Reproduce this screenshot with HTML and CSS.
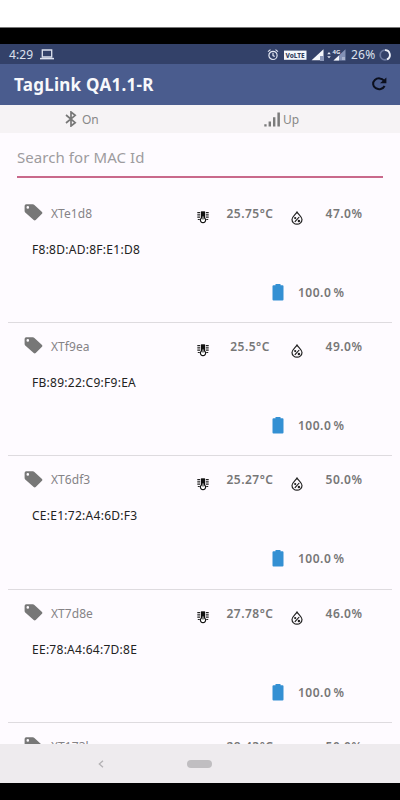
FILE: index.html
```html
<!DOCTYPE html>
<html lang="en">
<head>
<meta charset="utf-8">
<title>TagLink QA1.1-R</title>
<link rel="stylesheet" href="styles.css">
</head>
<body>
<svg class="defs" aria-hidden="true">
  <symbol id="tag" viewBox="0 0 19 17"><path fill-rule="evenodd" d="M2.2.3H8.8Q9.7.3 10.4.9L18 8Q18.9 8.9 18 9.8L11.7 16Q10.7 16.9 9.7 16L1.2 8.4Q.6 7.8.6 7V1.9Q.6.3 2.2.3ZM3.8 2.1A1.3 1.3 0 1 0 3.8 4.7A1.3 1.3 0 1 0 3.8 2.1Z"/></symbol>
  <symbol id="thermo" viewBox="0 0 12 13"><path d="M4.5 1H7.5V7A2.6 2.6 0 1 1 4.5 7Z" fill="#fff" stroke="#111" stroke-width="1.2"/><path d="M4.2.6H7.8V5.5H4.2Z" fill="#111"/><path d="M6 5V8.5" stroke="#333" stroke-width="1.2"/><path d="M.3 1.6H3.2M.3 3.9H3.2M.3 6.2H3.2M.8 8.5H2.8M8.8 1.6H11.7M8.8 3.9H11.7M8.8 6.2H11.7M9.2 8.5H11.2" stroke="#222" stroke-width="1.2"/></symbol>
  <symbol id="drop" viewBox="0 0 12 14"><path d="M6 1C4.7 3.4 1 5.6 1 8.6A5 4.6 0 0 0 11 8.6C11 5.6 7.3 3.4 6 1Z" fill="none" stroke="#222" stroke-width="1.2"/><path d="M3.8 10.8L8.2 6" stroke="#111" stroke-width="1.1"/><circle cx="4.2" cy="7.1" r="1.1" fill="#222"/><circle cx="7.9" cy="10" r="1.2" fill="#222"/></symbol>
  <symbol id="battery" viewBox="0 0 12 17"><path d="M3.5 0H8.5V1.2H10.5Q11.5 1.2 11.5 2.2V15.5Q11.5 16.5 10.5 16.5H1.5Q.5 16.5.5 15.5V2.2Q.5 1.2 1.5 1.2H3.5Z" fill="#3490d3"/></symbol>
</svg>
<div class="letterbox"></div>
<header class="status">
  <span class="clock">4:29</span>
  <svg class="laptop" viewBox="0 0 14 11"><path d="M2.3 1H11.7V8H2.3Z" fill="none" stroke="#dde1ee" stroke-width="1.3"/><path d="M0 9.6H14" stroke="#dde1ee" stroke-width="1.5"/></svg>
  <svg class="indicators" viewBox="0 0 80 14">
    <g fill="none" stroke="#e3e7f2" stroke-width="1.2"><circle cx="6" cy="7.4" r="4.1"/><path d="M6 4.8V7.6L7.7 8.6M1 3.6L3.5 1.6M11 3.6L8.5 1.6"/></g>
    <path d="M17 2.6H39.5V11.8H17Z" fill="#f5f7fb"/>
    <text x="18.6" y="9.6" class="lte" textLength="19">VoLTE</text>
    <path d="M44.6 12.3L56.5 1.2V12.3Z" fill="#f5f7fb"/>
    <path d="M53 8H57V13H53Z" fill="#8b97b8"/>
    <path d="M60.2 6.2L62 4.1L63.8 6.2ZM60.2 8.2L62 10.3L63.8 8.2Z" fill="#e3e7f2"/>
    <path d="M66.5 12.5L78.5 1.2V12.5Z" fill="#8491b6"/>
    <path d="M66.5 12.5L72 7.4V12.5Z" fill="#f5f7fb"/>
    <text x="65.5" y="5.8" class="net">4G</text>
    <path d="M75 9H78V12H75Z" fill="#aab3ce"/>
  </svg>
  <span class="percent">26%</span>
  <svg class="ring" viewBox="0 0 12 12" fill="none" stroke-width="1.7"><circle cx="6" cy="6" r="4.8" stroke="#6a789f"/><path d="M6 1.2A4.8 4.8 0 0 1 8 10.4" stroke="#edf0f7"/></svg>
</header>
<div class="appbar">
  <h1>TagLink QA1.1-R</h1>
  <svg class="refresh" viewBox="0 0 16 16"><path d="M13 4.6A6 5.4 0 1 0 13.6 10" fill="none" stroke="#0b0f1d" stroke-width="2"/><path d="M15.4 1.6V7.2H9Z" fill="#0b0f1d"/></svg>
</div>
<div class="links">
  <div class="link bluetooth"><svg viewBox="0 0 12 16"><path d="M1 4L10.2 11.7L6 15V1L10.2 4.3L1 12" fill="none" stroke="#777" stroke-width="1.7"/></svg><span>On</span></div>
  <div class="link signal"><svg viewBox="0 0 17 15"><path d="M.3 12.3H2.6V14.5H.3ZM4.6 9.5H7V14.5H4.6ZM9 5.2H11.4V14.5H9ZM13.4.5H15.9V14.5H13.4Z" fill="#7b7b7b"/></svg><span>Up</span></div>
</div>
<main>
  <div class="search">Search for MAC Id</div>
  <section class="list">
    <article class="row"><svg class="tag"><use href="#tag"/></svg><span class="name">XTe1d8</span><svg class="thermo"><use href="#thermo"/></svg><b class="value temp">25.75°C</b><svg class="drop"><use href="#drop"/></svg><b class="value">47.0%</b><span class="mac">F8:8D:AD:8F:E1:D8</span><div class="charge"><svg><use href="#battery"/></svg><b>100.0 %</b></div></article>
    <article class="row"><svg class="tag"><use href="#tag"/></svg><span class="name">XTf9ea</span><svg class="thermo"><use href="#thermo"/></svg><b class="value temp">25.5°C</b><svg class="drop"><use href="#drop"/></svg><b class="value">49.0%</b><span class="mac">FB:89:22:C9:F9:EA</span><div class="charge"><svg><use href="#battery"/></svg><b>100.0 %</b></div></article>
    <article class="row"><svg class="tag"><use href="#tag"/></svg><span class="name">XT6df3</span><svg class="thermo"><use href="#thermo"/></svg><b class="value temp">25.27°C</b><svg class="drop"><use href="#drop"/></svg><b class="value">50.0%</b><span class="mac">CE:E1:72:A4:6D:F3</span><div class="charge"><svg><use href="#battery"/></svg><b>100.0 %</b></div></article>
    <article class="row"><svg class="tag"><use href="#tag"/></svg><span class="name">XT7d8e</span><svg class="thermo"><use href="#thermo"/></svg><b class="value temp">27.78°C</b><svg class="drop"><use href="#drop"/></svg><b class="value">46.0%</b><span class="mac">EE:78:A4:64:7D:8E</span><div class="charge"><svg><use href="#battery"/></svg><b>100.0 %</b></div></article>
    <article class="row"><svg class="tag"><use href="#tag"/></svg><span class="name">XT173b</span><svg class="thermo"><use href="#thermo"/></svg><b class="value temp">28.43°C</b><svg class="drop"><use href="#drop"/></svg><b class="value">50.0%</b></article>
  </section>
</main>
<nav>
  <svg class="back" viewBox="0 0 6 8"><path d="M5 .7L1.3 4L5 7.3" fill="none" stroke="#b3b1b4" stroke-width="1.3"/></svg>
  <span class="home"></span>
</nav>
<div class="footer"></div>
</body>
</html>
```
FILE: styles.css
```css
* { box-sizing: border-box; }
body {
  margin: 0;
  width: 400px;
  height: 800px;
  padding-top: 27px;
  overflow: hidden;
  display: flex;
  flex-direction: column;
  background: #fff;
  font-family: "Noto Sans", "Open Sans", sans-serif;
  color: #777;
}
svg { display: block; flex: none; }
.defs { width: 0; height: 0; position: absolute; }
.letterbox { height: 17px; flex: none; background: #000; border-top: 1px solid #777; }
.status {
  height: 20px;
  flex: none;
  display: flex;
  align-items: center;
  padding: 1px 9px 0 9px;
  background: #334169;
  color: #dde1ee;
  font-size: 12px;
}
.clock { width: 31px; letter-spacing: 0.1px; }
.laptop { width: 14px; height: 11px; }
.indicators { width: 80px; height: 14px; margin-left: auto; }
.lte { font-size: 6.5px; font-weight: 800; fill: #333f60; }
.net { font-size: 6px; font-weight: 700; fill: #e3e7f2; }
.percent { margin-left: 4px; width: 28px; letter-spacing: 0.2px; }
.ring { width: 12px; height: 12px; }
.appbar {
  height: 41px;
  flex: none;
  display: flex;
  align-items: center;
  justify-content: space-between;
  padding: 0 13px 0 14px;
  background: #4a5c8e;
}
h1 { margin: 0; font-size: 17px; line-height: 22px; font-weight: 700; color: #f7f8fb; letter-spacing: 0.26px; }
.refresh { width: 16px; height: 16px; margin-bottom: 1px; }
.links { height: 28px; flex: none; display: flex; background: #f6f3f5; font-size: 12px; color: #888; }
.link { display: flex; align-items: center; }
.bluetooth { width: 200px; padding-left: 65px; gap: 5px; }
.bluetooth svg { width: 12px; height: 16px; }
.signal { padding-left: 64px; gap: 2px; }
.signal svg { width: 17px; height: 15px; }
main { flex: 1; min-height: 0; overflow: hidden; background: #fefbff; }
.search {
  height: 45px;
  margin: 0 17px 11.67px;
  padding-top: 12px;
  border-bottom: 2px solid #c9698b;
  font-size: 15px;
  line-height: 24px;
  letter-spacing: 0.07px;
  color: #9d9b9e;
}
.row {
  height: 133.33px;
  margin: 0 8px;
  padding-left: 16px;
  display: grid;
  grid-template-columns: 27px 146px 12px 82px 12px 82px;
  grid-template-rows: 47px 25px 60px;
  align-items: center;
  border-bottom: 1px solid #dedbdf;
  font-size: 12px;
  overflow: hidden;
}
.tag { width: 19px; height: 17px; fill: #777; margin-bottom: 1px; }
.name { color: #858386; letter-spacing: 0.05px; }
.thermo { width: 12px; height: 13px; margin-top: 9px; }
.drop { width: 12px; height: 14px; margin-top: 9px; }
.value { text-align: center; font-weight: 600; letter-spacing: 0.5px; }
.mac { grid-column: 1 / 4; padding-left: 8px; color: #222; font-size: 12px; letter-spacing: 0.27px; }
.charge { grid-row: 3; grid-column: 1 / -1; padding: 1px 0 0 248px; display: flex; align-items: center; gap: 14px; }
.charge svg { width: 12px; height: 17px; }
.charge b { font-weight: 600; word-spacing: -1.5px; letter-spacing: 0.5px; }
nav { height: 39px; flex: none; display: flex; align-items: center; padding-left: 98px; background: #eeebee; }
.back { width: 6px; height: 8px; }
.home { width: 25px; height: 8px; margin-left: 83px; border-radius: 4px; background: #c0bec1; }
.footer { height: 17px; flex: none; background: #000; }
```
